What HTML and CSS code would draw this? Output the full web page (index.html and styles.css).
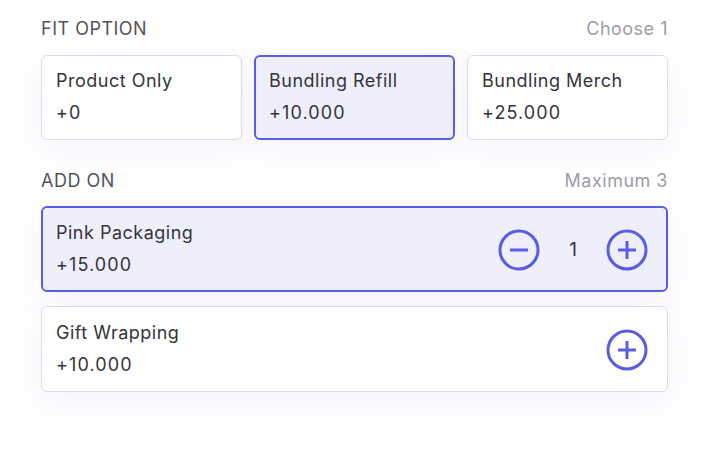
FILE: index.html
```html
<!DOCTYPE html>
<html>
<head>
<meta charset="utf-8">
<link rel="stylesheet" href="styles.css">
</head>
<body>
<div class="panel">
  <div class="section-head">
    <span class="title">FIT OPTION</span>
    <span class="hint">Choose 1</span>
  </div>
  <div class="fit-grid">
    <div class="card">
      <div class="name">Product Only</div>
      <div class="price">+0</div>
    </div>
    <div class="card selected">
      <div class="name">Bundling Refill</div>
      <div class="price">+10.000</div>
    </div>
    <div class="card">
      <div class="name">Bundling Merch</div>
      <div class="price">+25.000</div>
    </div>
  </div>

  <div class="section-head second">
    <span class="title">ADD ON</span>
    <span class="hint">Maximum 3</span>
  </div>
  <div class="addons">
    <div class="card addon selected">
      <div class="info">
        <div class="name">Pink Packaging</div>
        <div class="price">+15.000</div>
      </div>
      <div class="stepper">
        <svg class="icon" viewBox="0 0 44 44"><circle cx="22" cy="22" r="19" /><line x1="13" y1="22" x2="31" y2="22" /></svg>
        <span class="qty">1</span>
        <svg class="icon" viewBox="0 0 44 44"><circle cx="22" cy="22" r="19" /><line x1="13" y1="22" x2="31" y2="22" /><line x1="22" y1="13" x2="22" y2="31" /></svg>
      </div>
    </div>
    <div class="card addon">
      <div class="info">
        <div class="name">Gift Wrapping</div>
        <div class="price">+10.000</div>
      </div>
      <div class="stepper">
        <svg class="icon" viewBox="0 0 44 44"><circle cx="22" cy="22" r="19" /><line x1="13" y1="22" x2="31" y2="22" /><line x1="22" y1="13" x2="22" y2="31" /></svg>
      </div>
    </div>
  </div>
</div>
</body>
</html>
```

FILE: styles.css
```css
* { box-sizing: border-box; }
html, body { margin: 0; padding: 0; background: #ffffff; }
body {
  font-family: "Inter", "Noto Sans", "Liberation Sans", sans-serif;
  color: #34343a;
  width: 710px;
  height: 450px;
  overflow: hidden;
}
.panel {
  padding: 16px 42px 0 41px;
}
.section-head {
  display: flex;
  justify-content: space-between;
  align-items: center;
  height: 24px;
  font-size: 18px;
  margin-bottom: 15px;
}
.section-head.second { margin-top: 28px; margin-bottom: 14px; }
.section-head .title { color: #54545b; letter-spacing: 0.5px; }
.section-head .hint { color: #9c9ca8; letter-spacing: 0.5px; }
.fit-grid {
  display: grid;
  grid-template-columns: 1fr 1fr 1fr;
  gap: 12px;
}
.card {
  background: #ffffff;
  border: 1px solid #dcdce2;
  border-radius: 6px;
  padding: 9px 14px 12px 14px;
  box-shadow: 0 10px 36px rgba(90, 90, 220, 0.07);
  font-size: 18px;
  height: 85px;
}
.card.selected {
  background: #efeffc;
  border: 2px solid #5b5ce6;
  padding: 8px 13px 11px 13px;
}
.card .name { line-height: 32px; letter-spacing: 0.5px; }
.card .price { line-height: 32px; letter-spacing: 1.1px; }
.addons {
  display: flex;
  flex-direction: column;
  gap: 14px;
}
.card.addon {
  display: flex;
  flex-shrink: 0;
  justify-content: space-between;
  align-items: center;
  height: 86px;
  padding: 10px 18px 11px 14px;
}
.card.addon.selected { padding: 9px 17px 10px 13px; }
.stepper {
  display: flex;
  align-items: center;
  gap: 20px;
  margin-top: 2px;
}
.icon {
  width: 44px;
  height: 44px;
  fill: none;
  stroke: #5b5ce6;
  stroke-width: 3;
}
.qty { font-size: 19px; width: 24px; text-align: center; }
```
